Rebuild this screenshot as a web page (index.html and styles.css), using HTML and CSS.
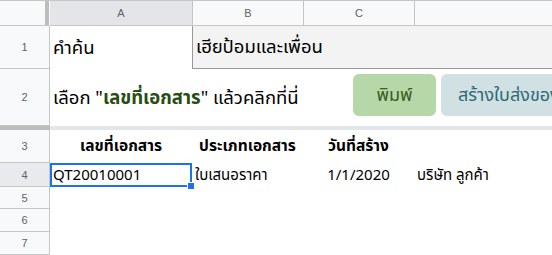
FILE: index.html
```html
<!DOCTYPE html>
<html lang="th">
<head>
    <meta charset="UTF-8">
    <meta name="viewport" content="width=device-width, initial-scale=1.0">
    <title>เอกสาร</title>
    <link rel="stylesheet" href="styles.css">
</head>
<body>
    <div class="sheet">
        <div class="row col-heads">
            <div class="corner"></div>
            <div class="col-head col-a selected">A</div>
            <div class="col-head col-b">B</div>
            <div class="col-head col-c">C</div>
            <div class="col-head col-d"></div>
        </div>

        <div class="row r1">
            <div class="row-head">1</div>
            <div class="cell col-a label">คำค้น</div>
            <div class="cell search-box">เฮียป้อมและเพื่อน</div>
        </div>

        <div class="row r2">
            <div class="row-head">2</div>
            <div class="cell hint">เลือก "<b>เลขที่เอกสาร</b>" แล้วคลิกที่นี่</div>
            <div class="actions">
                <button class="btn btn-print">พิมพ์</button>
                <button class="btn btn-delivery">สร้างใบส่งของ</button>
            </div>
        </div>

        <div class="freeze">
            <div class="freeze-handle"></div>
            <div class="freeze-line"></div>
        </div>

        <div class="row r3">
            <div class="row-head">3</div>
            <div class="cell col-a th">เลขที่เอกสาร</div>
            <div class="cell col-b th">ประเภทเอกสาร</div>
            <div class="cell col-c th">วันที่สร้าง</div>
        </div>

        <div class="row r4">
            <div class="row-head selected">4</div>
            <div class="cell col-a active">QT20010001<span class="handle"></span></div>
            <div class="cell col-b">ใบเสนอราคา</div>
            <div class="cell col-c center">1/1/2020</div>
            <div class="cell col-d">บริษัท ลูกค้า</div>
        </div>

        <div class="row r5">
            <div class="row-head">5</div>
        </div>
        <div class="row r6">
            <div class="row-head">6</div>
        </div>
        <div class="row r7">
            <div class="row-head">7</div>
        </div>
    </div>
</body>
</html>
```

FILE: styles.css
```css
body {
    margin: 0;
    background-color: #fff;
    font-family: "Noto Sans Thai", "Noto Sans", "DejaVu Sans", sans-serif;
    color: #000;
    overflow: hidden;
}

.sheet {
    width: 552px;
    height: 255px;
    overflow: hidden;
}

.row {
    display: flex;
    align-items: stretch;
}

.col-heads {
    height: 26px;
    border-top: 1px solid #c4c7c5;
    box-sizing: border-box;
    background-color: #f8f9fa;
}

.corner {
    width: 45px;
    border-right: 4px solid #bdbdbd;
    border-bottom: 1px solid #c4c7c5;
    flex: none;
}

.col-head {
    display: flex;
    align-items: center;
    justify-content: center;
    font-family: "Liberation Sans", Arial, sans-serif;
    font-size: 11px;
    color: #5f6368;
    border-left: 1px solid #c4c7c5;
    border-bottom: 1px solid #c4c7c5;
    box-sizing: border-box;
}

.col-heads .col-a {
    margin-left: 1px;
    border-left: none;
}

.col-head.selected {
    background-color: #e3e5e9;
}

.col-a { width: 142px; flex: none; }
.col-b { width: 111px; flex: none; }
.col-c { width: 111px; flex: none; }
.col-d { flex: 1; }

.row-head {
    width: 49px;
    flex: none;
    display: flex;
    align-items: center;
    justify-content: center;
    font-family: "Liberation Sans", Arial, sans-serif;
    font-size: 11px;
    color: #5f6368;
    background-color: #f8f9fa;
    border-right: 1px solid #c4c7c5;
    border-bottom: 1px solid #c4c7c5;
}

.row-head.selected {
    background-color: #e8eaed;
}

.cell {
    display: flex;
    align-items: center;
    padding: 0 3px;
    box-sizing: border-box;
    font-size: 15px;
    white-space: nowrap;
}

.r1 { height: 43px; }
.r2 { height: 57px; }
.r3 { height: 33px; }
.r4 { height: 24px; }
.r5 { height: 22px; }
.r6 { height: 23px; }
.r7 { height: 23px; }

.r1 .label {
    font-size: 18.5px;
}

.search-box {
    flex: 1;
    font-size: 18.5px;
    background-color: #f3f3f3;
    border-left: 1px solid #999;
    border-bottom: 1px solid #999;
    height: 43px;
    box-sizing: border-box;
}

.hint {
    width: 303px;
    flex: none;
    font-size: 18.5px;
}

.hint b {
    color: #274e13;
    font-weight: 700;
}

.actions {
    display: flex;
    gap: 5px;
    padding-top: 5px;
    padding-bottom: 9px;
}

.btn {
    height: 42px;
    border: none;
    border-radius: 6px;
    font-family: inherit;
    font-size: 18px;
    padding: 0;
    white-space: nowrap;
}

.btn-print {
    width: 83px;
    background-color: #b6d7a8;
    color: #38601f;
}

.btn-delivery {
    width: 150px;
    background-color: #d0e0e3;
    color: #2f6a75;
    text-align: left;
    padding-left: 17px;
}

.freeze {
    display: flex;
    height: 4px;
}

.freeze-handle {
    width: 50px;
    background-color: #bdbdbd;
}

.freeze-line {
    flex: 1;
    background-color: #e1e5ec;
}

.th {
    justify-content: center;
    font-weight: 700;
    font-size: 15.5px;
}

.r4 .cell {
    font-size: 15px;
}

.center {
    justify-content: center;
}

.active {
    position: relative;
    border: 2px solid #1a73e8;
    padding-left: 1px;
}

.handle {
    position: absolute;
    right: -5px;
    bottom: -5px;
    width: 6px;
    height: 6px;
    background-color: #1a73e8;
    border: 1px solid #fff;
}
```
